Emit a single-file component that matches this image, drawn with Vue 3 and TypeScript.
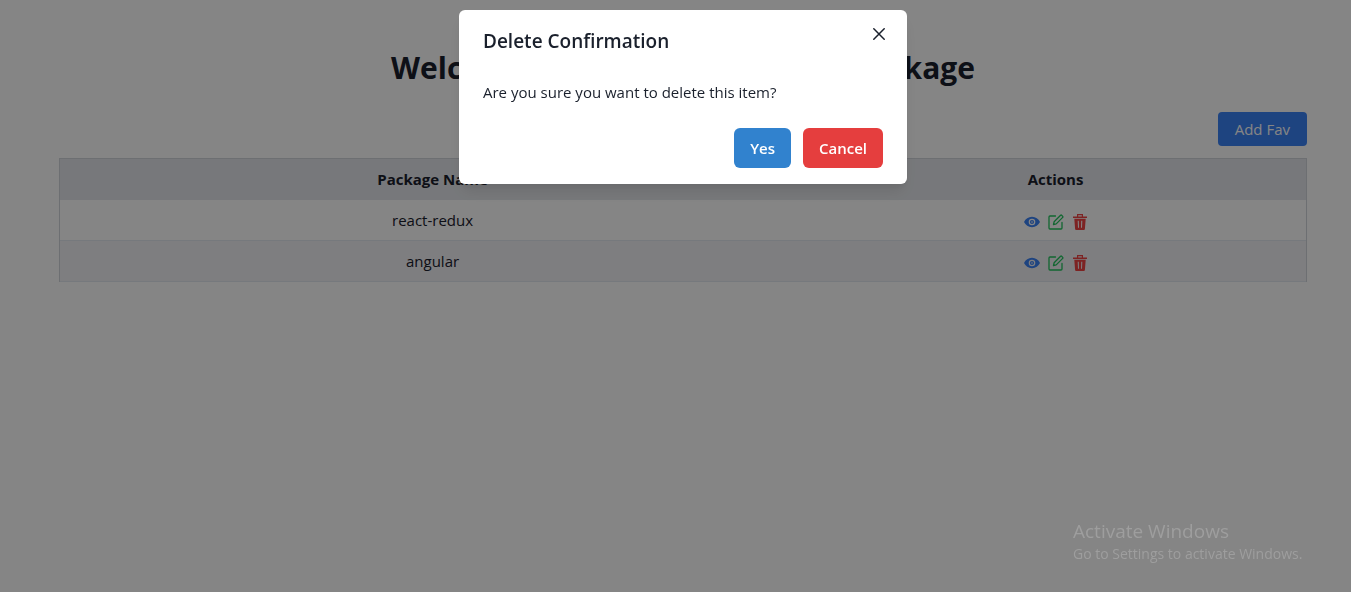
<script setup lang="ts">
import { ref } from 'vue'

interface FavPackage {
  id: number
  name: string
}

const packages = ref<FavPackage[]>([
  { id: 1, name: 'react-redux' },
  { id: 2, name: 'angular' },
])
const pendingId = ref<number | null>(2)

function closeDialog(): void {
  pendingId.value = null
}

function confirmDelete(): void {
  packages.value = packages.value.filter((item) => item.id !== pendingId.value)
  closeDialog()
}
</script>

<template>
  <div class="page">
    <main class="content">
      <h1 class="title">Welcome to Our Favorite NPM Package</h1>
      <div class="toolbar">
        <button type="button" class="add">Add Fav</button>
      </div>
      <table class="packages">
        <thead>
          <tr>
            <th scope="col" class="name-col">Package Name</th>
            <th scope="col">Actions</th>
          </tr>
        </thead>
        <tbody>
          <tr v-for="item in packages" :key="item.id">
            <td>{{ item.name }}</td>
            <td>
              <div class="actions">
                <button type="button" class="icon view" :aria-label="`View ${item.name}`">
                  <svg viewBox="0 0 16 16" width="16" height="16">
                    <path fill="currentColor" fill-rule="evenodd" d="M8 2.800C4.400 2.800 1.500 4.900 0 8c1.500 3.100 4.400 5.200 8 5.200s6.500-2.100 8-5.200c-1.500-3.100-4.400-5.200-8-5.200zm0 1.900a3.300 3.300 0 1 1 0 6.600 3.300 3.300 0 0 1 0-6.600zM8 5.900a2.100 2.100 0 1 0 0 4.200 2.100 2.100 0 0 0 0-4.200zm0 1.300a.8.8 0 1 1 0 1.600.8.8 0 0 1 0-1.600z" />
                  </svg>
                </button>
                <button type="button" class="icon edit" :aria-label="`Edit ${item.name}`">
                  <svg viewBox="0 0 16 16" width="16" height="16" fill="none" stroke="currentColor" stroke-width="1.300" stroke-linejoin="round" stroke-linecap="round">
                    <path d="M7.500 2H2Q1 2 1 3v11Q1 15 2 15h11q1 0 1-1V8.500" />
                    <path d="M5.500 10.500l.6-2.700 6.500-6.500q.5-.5 1 0l1.100 1.100q.5.5 0 1L8.200 9.900z" />
                  </svg>
                </button>
                <button type="button" class="icon delete" :aria-label="`Delete ${item.name}`" @click="pendingId = item.id">
                  <svg viewBox="0 0 16 16" width="16" height="16">
                    <path fill="currentColor" fill-rule="evenodd" d="M5 0h6v2.500h4v1.400H1V2.500h4zm1.200 1.200v1.300h3.600V1.200zM2.300 4.800h11.400L12.900 15q-.1 1-1 1H4.100q-.9 0-1-1zM5.700 6.800l.3 7h1l-.2-7zm3.500 0l-.2 7h1l.3-7z" />
                  </svg>
                </button>
              </div>
            </td>
          </tr>
        </tbody>
      </table>
    </main>

    <div v-if="pendingId !== null" class="overlay">
      <section class="dialog" role="dialog" aria-modal="true" aria-labelledby="dialog-title">
        <header class="dialog-header">
          <h2 id="dialog-title">Delete Confirmation</h2>
        </header>
        <button type="button" class="close" aria-label="Close" @click="closeDialog">
          <svg viewBox="0 0 12 12" width="12" height="12" fill="none" stroke="currentColor" stroke-width="1.500" stroke-linecap="round">
            <path d="M.8.8l10.400 10.400M11.200.8L.8 11.200" />
          </svg>
        </button>
        <p class="dialog-body">Are you sure you want to delete this item?</p>
        <footer class="dialog-footer">
          <button type="button" class="choice yes" @click="confirmDelete">Yes</button>
          <button type="button" class="choice cancel" @click="closeDialog">Cancel</button>
        </footer>
      </section>
    </div>

    <aside class="watermark">
      <p class="watermark-title">Activate Windows</p>
      <p>Go to Settings to activate Windows.</p>
    </aside>
  </div>
</template>

<style>
body {
  margin: 0;
  background: #fff;
}
</style>

<style scoped>
.page {
  min-height: 100vh;
  font-family: "Segoe UI", "Open Sans", "Noto Sans", sans-serif;
  font-size: 15px;
  line-height: 24px;
  color: #1a202c;
}

h1,
h2,
p {
  margin: 0;
}

button {
  padding: 0;
  border: 0;
  font: inherit;
  cursor: pointer;
}

svg {
  display: block;
}

.content {
  padding: 50px 44px 0 59px;
}

.title {
  font-size: 30px;
  line-height: 36px;
  font-weight: 700;
  text-align: center;
}

.toolbar {
  display: flex;
  justify-content: flex-end;
  padding: 26px 0 12px;
}

.add {
  height: 34px;
  padding: 0 17px;
  border-radius: 4px;
  background: #3b82f6;
  color: #fff;
}

.packages {
  width: 100%;
  table-layout: fixed;
  border-collapse: separate;
  border-spacing: 0;
  border: 1px solid #d1d5db;
  border-bottom: 0;
  text-align: center;
}

.name-col {
  width: 59.8%;
}

th {
  height: 39px;
  padding: 0 0 2px;
  background: #e5e7eb;
  font-weight: 700;
}

td {
  height: 40px;
  padding: 0;
  border-bottom: 1px solid #e2e8f0;
}

tbody tr:nth-child(even) {
  background: #f1f1f5;
}

.actions {
  display: flex;
  justify-content: center;
  gap: 8px;
  padding-top: 4px;
}

.icon {
  background: none;
}

.view {
  color: #3b82f6;
}

.edit {
  color: #22c55e;
}

.delete {
  color: #ef4444;
}

.overlay {
  position: fixed;
  inset: 0;
  padding: 10px 0 0 15px;
  background: rgba(0, 0, 0, 0.48);
}

.dialog {
  position: relative;
  max-width: 448px;
  margin: 0 auto;
  border-radius: 6px;
  background: #fff;
  box-shadow: 0 10px 15px -3px rgba(0, 0, 0, 0.1), 0 4px 6px -2px rgba(0, 0, 0, 0.05);
}

.dialog-header {
  padding: 16px 24px;
}

h2 {
  font-size: 19px;
  line-height: 30px;
  font-weight: 600;
}

.close {
  position: absolute;
  top: 8px;
  right: 12px;
  display: flex;
  align-items: center;
  justify-content: center;
  width: 32px;
  height: 32px;
  border-radius: 6px;
  background: none;
  color: #1a202c;
}

.dialog-body {
  padding: 8px 24px;
}

.dialog-footer {
  display: flex;
  justify-content: flex-end;
  gap: 12px;
  padding: 16px 24px;
}

.choice {
  height: 40px;
  padding: 0 16px;
  border-radius: 6px;
  color: #fff;
  font-weight: 600;
}

.yes {
  background: #3182ce;
}

.cancel {
  background: #e53e3e;
}

.watermark {
  position: fixed;
  right: 42px;
  bottom: 27px;
  min-width: 236px;
  color: #9e9e9e;
  font-size: 14px;
  line-height: 22px;
  pointer-events: none;
}

.watermark-title {
  font-size: 19px;
  line-height: 24px;
}
</style>
